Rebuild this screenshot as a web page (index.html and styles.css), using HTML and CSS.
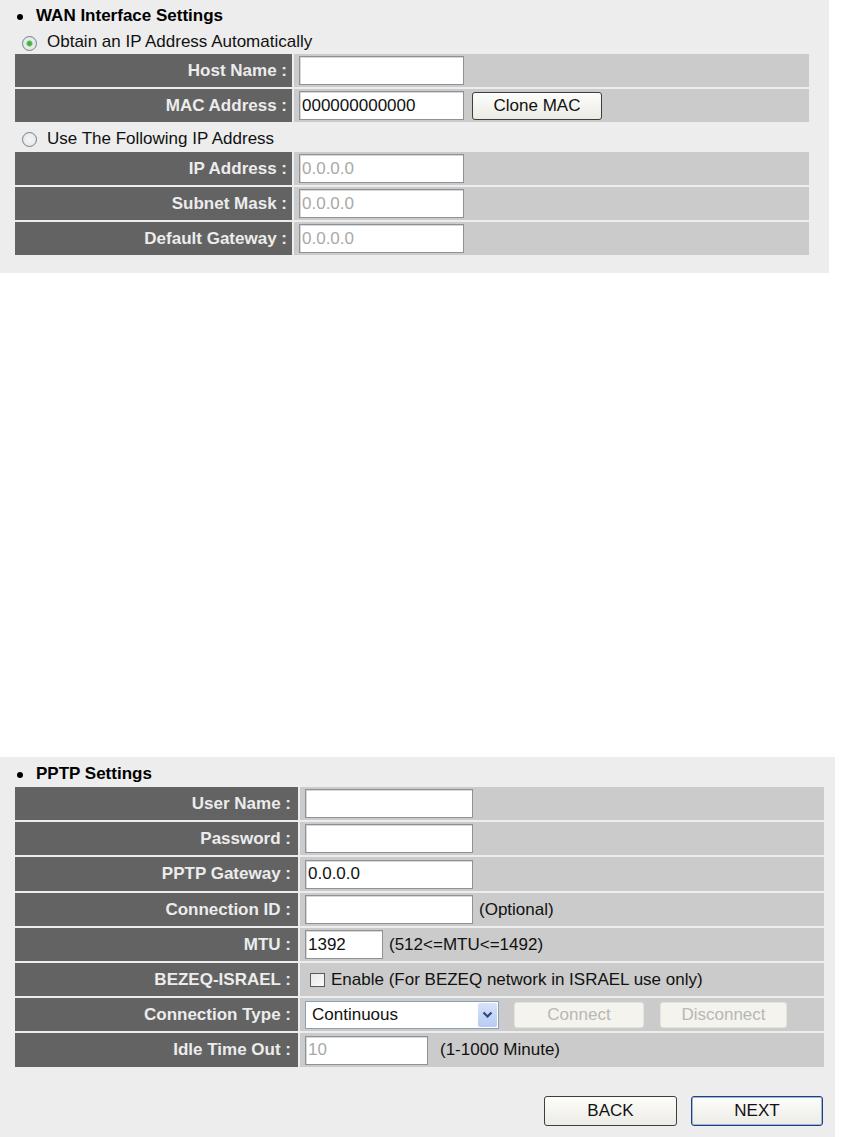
FILE: index.html
```html
<!DOCTYPE html>
<html>
<head>
    <link rel="stylesheet" href="styles.css">
</head>
<body>
    <div class="panel wan-panel">
        <div class="section-title"><span class="bullet"></span>WAN Interface Settings</div>
        <label class="radio-line first"><input type="radio" name="ipmode" class="radio" checked>Obtain an IP Address Automatically</label>
        <div class="row">
            <div class="label">Host Name :</div>
            <div class="value"><input type="text" class="field"></div>
        </div>
        <div class="row">
            <div class="label">MAC Address :</div>
            <div class="value">
                <input type="text" class="field" value="000000000000">
                <button class="btn clone-btn">Clone MAC</button>
            </div>
        </div>
        <label class="radio-line second"><input type="radio" name="ipmode" class="radio">Use The Following IP Address</label>
        <div class="row">
            <div class="label">IP Address :</div>
            <div class="value"><input type="text" class="field dim" value="0.0.0.0"></div>
        </div>
        <div class="row">
            <div class="label">Subnet Mask :</div>
            <div class="value"><input type="text" class="field dim" value="0.0.0.0"></div>
        </div>
        <div class="row">
            <div class="label">Default Gateway :</div>
            <div class="value"><input type="text" class="field dim" value="0.0.0.0"></div>
        </div>
    </div>

    <div class="panel pptp-panel">
        <div class="section-title"><span class="bullet"></span>PPTP Settings</div>
        <div class="row">
            <div class="label">User Name :</div>
            <div class="value"><input type="text" class="field wide"></div>
        </div>
        <div class="row">
            <div class="label">Password :</div>
            <div class="value"><input type="password" class="field wide"></div>
        </div>
        <div class="row tall">
            <div class="label">PPTP Gateway :</div>
            <div class="value"><input type="text" class="field wide" value="0.0.0.0"></div>
        </div>
        <div class="row">
            <div class="label">Connection ID :</div>
            <div class="value"><input type="text" class="field wide"><span class="note">(Optional)</span></div>
        </div>
        <div class="row">
            <div class="label">MTU :</div>
            <div class="value"><input type="text" class="field short" value="1392"><span class="note">(512&lt;=MTU&lt;=1492)</span></div>
        </div>
        <div class="row">
            <div class="label">BEZEQ-ISRAEL :</div>
            <div class="value"><label class="check-line"><input type="checkbox" class="check">Enable (For BEZEQ network in ISRAEL use only)</label></div>
        </div>
        <div class="row">
            <div class="label">Connection Type :</div>
            <div class="value">
                <div class="select-box">
                    <span class="select-text">Continuous</span>
                    <span class="select-arrow">
                        <svg width="11" height="8" viewBox="0 0 11 8"><path d="M1.5 1.5 L5.5 5.5 L9.5 1.5" fill="none" stroke="#2c4a7c" stroke-width="2.2"/></svg>
                    </span>
                </div>
                <button class="btn off-btn connect-btn">Connect</button>
                <button class="btn off-btn disconnect-btn">Disconnect</button>
            </div>
        </div>
        <div class="row tall">
            <div class="label">Idle Time Out :</div>
            <div class="value"><input type="text" class="field mid dim" value="10"><span class="note idle-note">(1-1000 Minute)</span></div>
        </div>
        <div class="actions">
            <button class="btn nav-btn">BACK</button>
            <button class="btn nav-btn next-btn">NEXT</button>
        </div>
    </div>
</body>
</html>
```

FILE: styles.css
```css
body {
    margin: 0;
    font-family: "Liberation Sans", Arial, sans-serif;
    font-size: 17px;
    color: #000;
    background: #fff;
}
.panel {
    background: #ededed;
    display: flex;
    flex-direction: column;
    gap: 2px;
    box-sizing: border-box;
}
.wan-panel {
    width: 829px;
    padding: 0 20px 18px 15px;
    margin-bottom: 484px;
}
.pptp-panel {
    width: 835px;
    padding: 0 11px 11px 15px;
}
.section-title {
    display: flex;
    align-items: center;
    font-weight: bold;
    line-height: 20px;
    padding: 6px 0 3px;
}
.pptp-panel .section-title {
    padding: 7px 0 1px;
}
.bullet {
    width: 6px;
    height: 6px;
    border-radius: 50%;
    background: #000;
    margin: 1px 13px 0 2px;
}
.radio-line {
    display: flex;
    align-items: center;
    box-sizing: border-box;
    height: 21px;
    padding-top: 1px;
    color: #111;
}
.radio-line.second {
    height: 26px;
    padding-top: 4px;
}
.radio {
    appearance: none;
    width: 15px;
    height: 15px;
    margin: 2px 10px 0 7px;
    border: 1px solid #6f7f8f;
    border-radius: 50%;
    background: radial-gradient(circle, #f6f6f6 0, #dfe3e8 100%);
    box-sizing: border-box;
}
.second .radio {
    margin-top: 0;
}
.radio:checked {
    background: radial-gradient(circle, #3aa53a 0, #5dbb5d 2.5px, #e6eee6 3.5px, #dfe3e8 100%);
}
.row {
    display: grid;
    grid-template-columns: 277px 1fr;
    column-gap: 2px;
    height: 33px;
}
.row.tall {
    height: 34px;
}
.pptp-panel .row {
    grid-template-columns: 283px 1fr;
}
.label {
    background: #636363;
    color: #ececec;
    font-weight: bold;
    display: flex;
    align-items: center;
    justify-content: flex-end;
    padding-right: 5px;
    white-space: nowrap;
}
.pptp-panel .label {
    padding-right: 7px;
}
.value {
    background: #cbcbcb;
    display: flex;
    align-items: center;
    padding-left: 5px;
    white-space: nowrap;
    color: #111;
}
.field {
    width: 165px;
    height: 29px;
    box-sizing: border-box;
    border: 1px solid #8c9298;
    box-shadow: inset 1px 1px 0 #d8d8d8;
    background: #fff;
    font: inherit;
    color: #111;
    padding: 0 2px;
    margin: 0;
    outline: none;
}
.field.wide {
    width: 168px;
}
.field.short {
    width: 78px;
}
.field.mid {
    width: 123px;
}
.field.dim {
    color: #a9a9a9;
}
.note {
    margin-left: 6px;
}
.idle-note {
    margin-left: 12px;
}
.btn {
    font: inherit;
    color: #111;
    background: linear-gradient(#fdfdfb, #ecebe5);
    border: 1px solid #3e3e3e;
    border-radius: 3px;
    padding: 0;
    margin: 0;
}
.clone-btn {
    width: 130px;
    height: 28px;
    margin-left: 8px;
}
.check-line {
    display: flex;
    align-items: center;
}
.check {
    appearance: none;
    width: 15px;
    height: 14px;
    margin: 0 6px 0 5px;
    border: 1px solid #5a5a5a;
    background: linear-gradient(135deg, #e8e8e4, #fbfbfb);
    box-sizing: border-box;
}
.select-box {
    width: 194px;
    height: 28px;
    box-sizing: border-box;
    border: 1px solid #8aa0b9;
    background: #fff;
    display: flex;
    align-items: stretch;
}
.select-text {
    flex: 1;
    display: flex;
    align-items: center;
    padding-left: 6px;
}
.select-arrow {
    width: 19px;
    margin: 1px;
    background: linear-gradient(#d7e3fb, #b7cbf3);
    border-radius: 2px;
    display: flex;
    align-items: center;
    justify-content: center;
}
.off-btn {
    height: 26px;
    color: #b8b8b4;
    background: #f4f3ee;
    border-color: #e4e3dc;
}
.connect-btn {
    width: 130px;
    margin-left: 15px;
}
.disconnect-btn {
    width: 127px;
    margin-left: 16px;
}
.actions {
    display: flex;
    justify-content: flex-end;
    gap: 14px;
    margin-top: 27px;
    padding-right: 1px;
}
.nav-btn {
    width: 133px;
    height: 30px;
}
.next-btn {
    width: 132px;
    border-color: #20407a;
    box-shadow: inset 0 0 0 1px #9fb5dc;
}
```
